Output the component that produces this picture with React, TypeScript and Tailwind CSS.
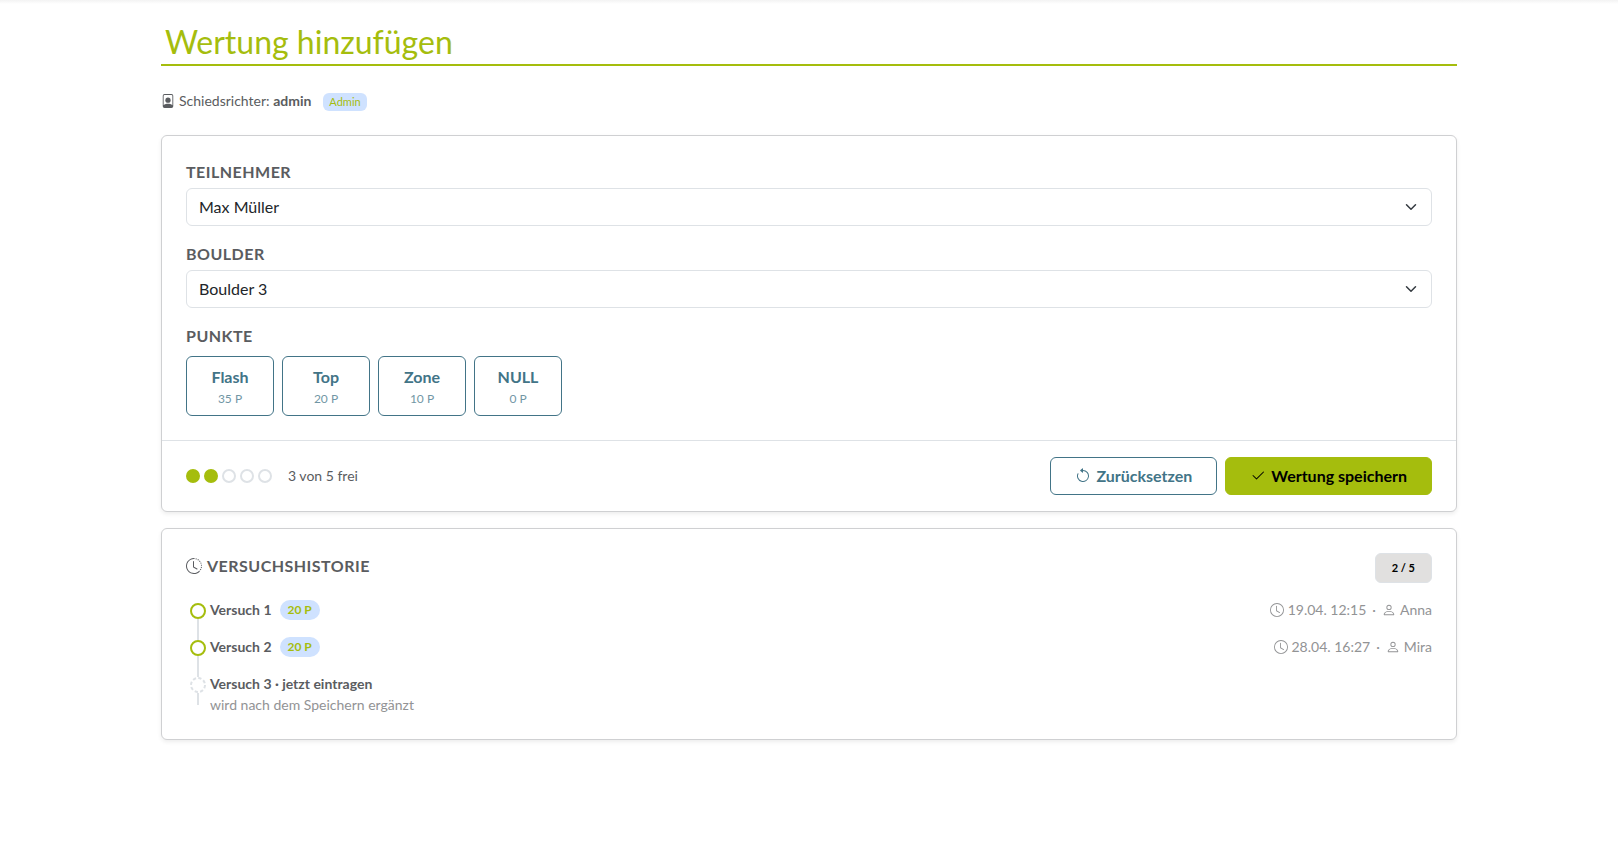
import React from 'react';
import {
  BsArrowCounterclockwise,
  BsCheck2,
  BsClock,
  BsClockHistory,
  BsFilePerson,
  BsPerson,
} from 'react-icons/bs';
import { clsx } from 'clsx';

const MAX_ATTEMPTS = 5;

const participants = ['Max Müller', 'Anna Schmidt', 'Jonas Weber'];
const boulders = ['Boulder 1', 'Boulder 2', 'Boulder 3', 'Boulder 4'];

const scores = [
  { label: 'Flash', points: 35 },
  { label: 'Top', points: 20 },
  { label: 'Zone', points: 10 },
  { label: 'NULL', points: 0 },
];

const attempts = [
  { nr: 1, points: 20, time: '19.04. 12:15', judge: 'Anna' },
  { nr: 2, points: 20, time: '28.04. 16:27', judge: 'Mira' },
];

interface SelectFieldProps {
  id: string;
  label: string;
  options: string[];
  defaultValue: string;
}

function SelectField({ id, label, options, defaultValue }: SelectFieldProps) {
  return (
    <div className="mb-4">
      <label htmlFor={id} className="mb-1 block font-bold uppercase tracking-[0.03em]">
        {label}
      </label>
      <div className="relative">
        <select
          id={id}
          defaultValue={defaultValue}
          className="block h-[38px] w-full appearance-none rounded-md border border-[#dee2e6] bg-white px-3 text-[#212529]"
        >
          {options.map((option) => (
            <option key={option}>{option}</option>
          ))}
        </select>
        <svg
          viewBox="0 0 16 16"
          fill="none"
          stroke="#343a40"
          strokeWidth="2"
          strokeLinecap="round"
          strokeLinejoin="round"
          className="pointer-events-none absolute inset-y-0 right-[15px] my-auto size-3"
        >
          <path d="m2 5 6 6 6-6" />
        </svg>
      </div>
    </div>
  );
}

function Card({ children }: { children: React.ReactNode }) {
  return (
    <section className="mb-4 rounded-md border border-[#cfd0d2] bg-white shadow-[0_2px_4px_rgba(0,0,0,0.075)]">
      {children}
    </section>
  );
}

function TimelineMarker({ open }: { open?: boolean }) {
  return (
    <div className="flex w-6 shrink-0 flex-col items-center">
      <svg viewBox="0 0 16 16" fill="none" className="mt-1 size-4 shrink-0" aria-hidden="true">
        <circle
          cx="8"
          cy="8"
          r="7"
          strokeWidth="2"
          stroke={open ? '#dee2e6' : '#a5bd0d'}
          strokeDasharray={open ? '3.3 2.2' : undefined}
        />
      </svg>
      <span className={clsx('w-0.5 bg-[#dee2e6]', open ? 'h-3' : '-mb-1 grow')} />
    </div>
  );
}

export default function App() {
  return (
    <div className="min-h-screen bg-white pr-px font-[Lato,'Liberation_Sans',sans-serif] text-base text-[#5a5c60]">
      <div className="h-1 bg-linear-to-b from-[#f3f3f3] to-white" />
      <main className="mx-auto max-w-[1320px] px-3 pt-4">
        <h1 className="border-b-2 border-[#a5bd0d] px-1 text-[32px] leading-[44px] text-[#a5bd0d]">
          Wertung hinzufügen
        </h1>

        <div className="mt-6 mb-6 flex items-center text-sm leading-[21px]">
          <BsFilePerson className="mr-1 size-3.5" />
          <span>
            Schiedsrichter: <strong>admin</strong>
          </span>
          <span className="mt-0.5 ml-3 rounded-md bg-[#cfe2ff] px-1.5 text-[11px] leading-[18px] text-[#a5bd0d]">
            Admin
          </span>
        </div>

        <Card>
          <form onSubmit={(e) => e.preventDefault()}>
            <div className="p-6">
              <SelectField
                id="participant"
                label="Teilnehmer"
                options={participants}
                defaultValue="Max Müller"
              />
              <SelectField id="boulder" label="Boulder" options={boulders} defaultValue="Boulder 3" />

              <fieldset>
                <legend className="mb-2 font-bold uppercase tracking-[0.03em]">Punkte</legend>
                <div className="flex flex-wrap gap-2">
                  {scores.map((score) => (
                    <button
                      key={score.label}
                      type="button"
                      className="flex h-15 w-22 flex-col items-center rounded-md border border-[#427487] pt-2 text-[#427487]"
                    >
                      <span className="font-bold leading-6">{score.label}</span>
                      <span className="text-xs leading-5 opacity-75">{score.points} P</span>
                    </button>
                  ))}
                </div>
              </fieldset>
            </div>

            {/* Footer: freie Versuche + Aktionen */}
            <div className="flex items-center justify-between border-t border-[#dee2e6] px-6 py-4">
              <div className="flex items-center">
                <div className="flex gap-1">
                  {Array.from({ length: MAX_ATTEMPTS }, (_, i) => (
                    <span
                      key={i}
                      className={clsx(
                        'size-3.5 rounded-full border-2',
                        i < attempts.length ? 'border-[#a5bd0d] bg-[#a5bd0d]' : 'border-[#dee2e6]'
                      )}
                    />
                  ))}
                </div>
                <span className="ml-4 text-sm">
                  {MAX_ATTEMPTS - attempts.length} von {MAX_ATTEMPTS} frei
                </span>
              </div>
              <div className="flex gap-2">
                <button
                  type="reset"
                  className="flex h-[38px] items-center gap-[5px] rounded-md border border-[#427487] px-6 font-bold text-[#427487]"
                >
                  <BsArrowCounterclockwise className="size-4" />
                  Zurücksetzen
                </button>
                <button
                  type="submit"
                  className="flex h-[38px] items-center gap-[5px] rounded-md border border-[#a5bd0d] bg-[#a5bd0d] px-6 font-bold text-black"
                >
                  <BsCheck2 className="size-4" />
                  Wertung speichern
                </button>
              </div>
            </div>
          </form>
        </Card>

        <Card>
          <div className="p-6">
            <div className="mb-4 flex items-start justify-between">
              <h2 className="flex items-center gap-[5px] font-bold uppercase leading-[26px] tracking-[0.03em]">
                <BsClockHistory className="size-4" />
                Versuchshistorie
              </h2>
              <span className="rounded-md border border-[#dee2e6] bg-[#e1e0df] px-4 text-[11px] leading-7 font-bold text-black">
                {attempts.length} / {MAX_ATTEMPTS}
              </span>
            </div>

            <ol className="text-sm leading-[21px]">
              {attempts.map((attempt) => (
                <li key={attempt.nr} className="flex">
                  <TimelineMarker />
                  <div className="flex grow items-center justify-between pb-4">
                    <div className="flex items-center">
                      <strong>Versuch {attempt.nr}</strong>
                      <span className="ml-2 rounded-full bg-[#cfe2ff] px-2 text-xs leading-5 font-bold text-[#a5bd0d]">
                        {attempt.points} P
                      </span>
                    </div>
                    <div className="flex items-center text-[#929395]">
                      <BsClock className="mr-1 size-3.5" />
                      {attempt.time}
                      <span className="mx-1.5">·</span>
                      <BsPerson className="mr-1 size-3.5" />
                      {attempt.judge}
                    </div>
                  </div>
                </li>
              ))}
              <li className="flex">
                <TimelineMarker open />
                <div>
                  <strong>Versuch {attempts.length + 1} · jetzt eintragen</strong>
                  <p className="text-[#929395]">wird nach dem Speichern ergänzt</p>
                </div>
              </li>
            </ol>
          </div>
        </Card>
      </main>
    </div>
  );
}
